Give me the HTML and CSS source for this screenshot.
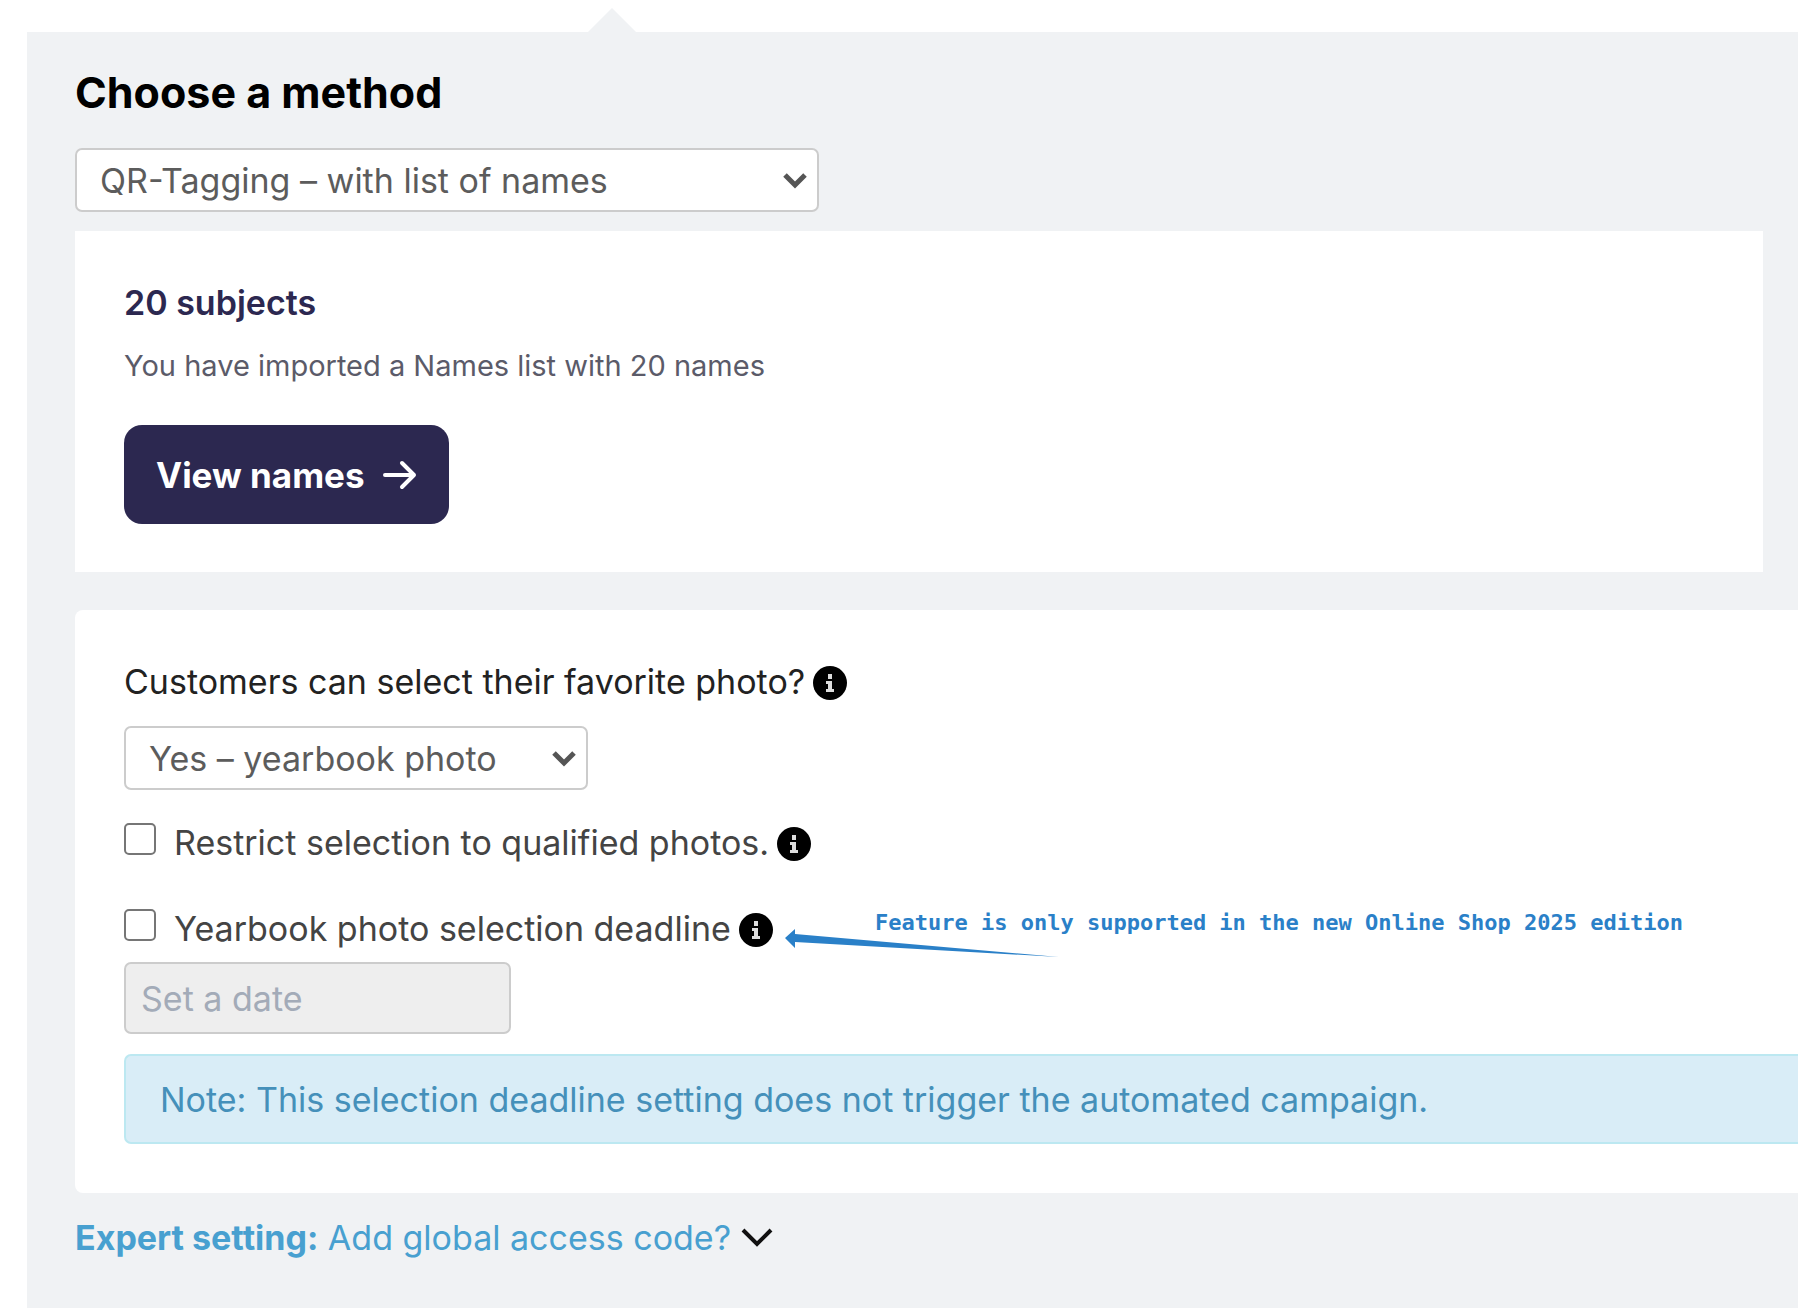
FILE: index.html
```html
<!DOCTYPE html>
<html lang="en">
<head>
  <meta charset="utf-8">
  <meta name="viewport" content="width=device-width, initial-scale=1">
  <title>Choose a method</title>
  <link rel="stylesheet" href="styles.css">
</head>
<body>
  <svg class="sprite" aria-hidden="true">
    <symbol id="icon-info" viewBox="0 0 34 34">
      <circle cx="17" cy="17" r="17" fill="#000"/>
      <path d="M15 8h4v5h-4zM13 15h6v8h2v3h-8v-3h2v-5h-2z" fill="#ddd"/>
    </symbol>
    <symbol id="icon-caret" viewBox="0 0 26 18">
      <path d="M3 3l10 10L23 3" fill="none" stroke="#555" stroke-width="5"/>
    </symbol>
  </svg>

  <main class="panel">
    <h1 class="panel-title"><label for="method">Choose a method</label></h1>
    <div class="select select-method">
      <select id="method">
        <option>QR-Tagging – with list of names</option>
      </select>
      <svg class="select-caret" aria-hidden="true"><use href="#icon-caret"/></svg>
    </div>

    <section class="card names-card">
      <h2 class="names-title">20 subjects</h2>
      <p class="names-text">You have imported a Names list with 20 names</p>
      <button class="button" type="button">
        View names
        <svg class="button-arrow" viewBox="0 0 34 30" aria-hidden="true">
          <path d="M2 15h29M19 3l12 12-12 12" fill="none" stroke="#fff" stroke-width="4" stroke-linecap="round" stroke-linejoin="round"/>
        </svg>
      </button>
    </section>

    <section class="card options-card">
      <div class="field-label">
        <label for="favorite">Customers can select their favorite photo?</label>
        <svg class="info" role="img" aria-label="Info"><use href="#icon-info"/></svg>
      </div>
      <div class="select select-favorite">
        <select id="favorite">
          <option>Yes – yearbook photo</option>
        </select>
        <svg class="select-caret" aria-hidden="true"><use href="#icon-caret"/></svg>
      </div>

      <div class="check-row">
        <input class="checkbox" type="checkbox" id="restrict">
        <label for="restrict">Restrict selection to qualified photos.</label>
        <svg class="info" role="img" aria-label="Info"><use href="#icon-info"/></svg>
      </div>

      <div class="check-row deadline-row">
        <input class="checkbox" type="checkbox" id="deadline">
        <label for="deadline">Yearbook photo selection deadline</label>
        <svg class="info" role="img" aria-label="Info"><use href="#icon-info"/></svg>
        <div class="callout">
          <svg class="callout-arrow" viewBox="0 0 274 29" aria-hidden="true">
            <path d="M0 9L10 0v5L274 28 10 13v6z" fill="#2a80c8"/>
          </svg>
          <span class="callout-text">Feature is only supported in the new Online Shop 2025 edition</span>
        </div>
      </div>

      <input class="date-input" type="text" placeholder="Set a date" aria-label="Deadline date" disabled>
      <p class="note">Note: This selection deadline setting does not trigger the automated campaign.</p>
    </section>

    <a class="expert" href="#access-code">
      <span><strong>Expert setting:</strong> Add global access code?</span>
      <svg class="expert-caret" viewBox="0 0 32 20" aria-hidden="true">
        <path d="M2 2l14 14L30 2" fill="none" stroke="#111" stroke-width="4"/>
      </svg>
    </a>
  </main>
</body>
</html>
```
FILE: styles.css
```css
* {
  box-sizing: border-box;
}

body {
  margin: 0;
  padding: 32px 0 6px 27px;
  background: #fff;
  color: #444;
  font-family: Inter, "Liberation Sans", sans-serif;
  font-size: 34px;
  line-height: 48px;
  overflow-x: hidden;
}

h1,
h2,
p {
  margin: 0;
}

.sprite {
  position: absolute;
  width: 0;
  height: 0;
}

.panel {
  position: relative;
  padding: 32px 0 46px 48px;
  background: #f0f2f4;
}

.panel::before {
  content: "";
  position: absolute;
  left: 561px;
  bottom: 100%;
  border: 24px solid transparent;
  border-top: 0;
  border-bottom-color: #f0f2f4;
}

.panel-title {
  margin-bottom: 28px;
  color: #000;
  font-size: 43px;
  font-weight: 700;
  line-height: 56px;
}

.select {
  position: relative;
  height: 64px;
}

.select-method {
  width: 744px;
  max-width: 100%;
}

.select-favorite {
  width: 464px;
  max-width: 100%;
}

.select select {
  appearance: none;
  width: 100%;
  height: 100%;
  padding: 2px 48px 0 23px;
  border: 2px solid #ccc;
  border-radius: 7px;
  background: #fff;
  color: #5c5c5c;
  font: inherit;
}

.select-caret {
  position: absolute;
  right: 11px;
  top: 24px;
  width: 26px;
  height: 18px;
  pointer-events: none;
}

.card {
  background: #fff;
}

.names-card {
  margin: 19px 35px 38px 0;
  padding: 48px 49px;
}

.names-title {
  margin-bottom: 19px;
  color: #2c2850;
  font-size: 34px;
  font-weight: 600;
}

.names-text {
  margin-bottom: 39px;
  color: #5b5b69;
  font-size: 29px;
  line-height: 40px;
}

.button {
  display: flex;
  align-items: center;
  gap: 18px;
  height: 99px;
  padding: 0 32px;
  border: 0;
  border-radius: 18px;
  background: #2c2850;
  color: #fff;
  font: inherit;
  font-size: 35px;
  font-weight: 700;
}

.button-arrow {
  width: 34px;
  height: 30px;
}

.options-card {
  padding: 48px 0 49px 49px;
  border-radius: 8px 0 0 8px;
}

.field-label {
  display: flex;
  align-items: center;
  gap: 8px;
  margin-bottom: 20px;
  color: #222;
}

.info {
  flex: none;
  width: 34px;
  height: 34px;
  margin-top: 2px;
}

.check-row {
  position: relative;
  display: flex;
  align-items: center;
  gap: 8px;
  margin-top: 29px;
}

.deadline-row {
  margin-top: 38px;
}

.checkbox {
  appearance: none;
  width: 32px;
  height: 32px;
  margin: 0 10px 8px 0;
  border: 2px solid #767676;
  border-radius: 5px;
  background: #fff;
}

.callout {
  position: absolute;
  left: 661px;
  top: 6px;
}

.callout-arrow {
  position: absolute;
  left: 0;
  top: 18px;
  width: 274px;
  height: 29px;
}

.callout-text {
  display: block;
  padding-left: 90px;
  color: #2a80c8;
  font-family: "DejaVu Sans Mono", monospace;
  font-size: 22px;
  font-weight: 700;
  line-height: 24px;
  white-space: nowrap;
}

.date-input {
  display: block;
  width: 387px;
  max-width: 100%;
  height: 72px;
  margin: 9px 0 20px;
  padding: 0 15px;
  border: 2px solid #ccc;
  border-radius: 7px;
  background: #eee;
  font: inherit;
}

.date-input::placeholder {
  color: #a3abb8;
  opacity: 1;
}

.note {
  padding: 20px 34px 18px;
  border: 2px solid #bce8f1;
  border-right: 0;
  border-radius: 7px 0 0 7px;
  background: #d9edf7;
  color: #4590ba;
}

.expert {
  display: flex;
  align-items: center;
  gap: 10px;
  margin-top: 21px;
  color: #48a0d0;
  text-decoration: none;
}

.expert strong {
  font-weight: 700;
}

.expert-caret {
  width: 32px;
  height: 20px;
}
```
